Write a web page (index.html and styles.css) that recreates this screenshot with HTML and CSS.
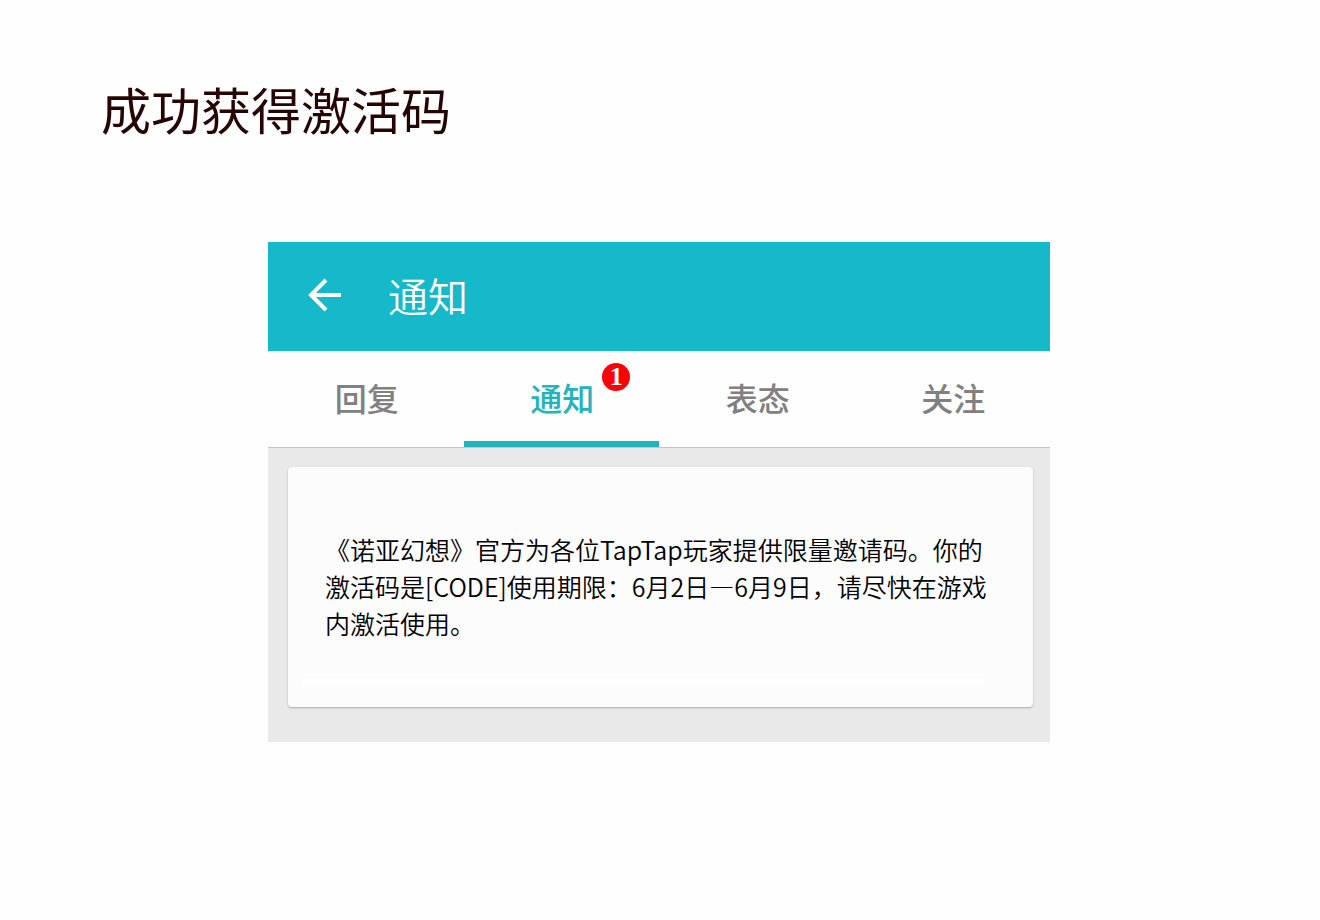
FILE: index.html
```html
<!DOCTYPE html>
<html lang="zh-CN">
<head>
<meta charset="utf-8">
<meta name="viewport" content="width=device-width, initial-scale=1">
<title>成功获得激活码</title>
<link rel="stylesheet" href="styles.css">
</head>
<body>
<h1 class="page-title">成功获得激活码</h1>
<main class="stage">
  <section class="panel">
    <header class="app-bar">
      <button class="back" type="button" aria-label="返回">
        <svg width="34" height="34" viewBox="0 0 34 34" fill="none" stroke="currentColor" stroke-width="4">
          <path d="M34 17H5M19 2L4 17L19 32"/>
        </svg>
      </button>
      <h2 class="app-title">通知</h2>
    </header>
    <nav class="tabs">
      <a class="tab" href="#reply">回复</a>
      <a class="tab tab-active" href="#notice" aria-current="page"><span class="tab-label">通知<span class="badge">1</span></span></a>
      <a class="tab" href="#attitude">表态</a>
      <a class="tab" href="#follow">关注</a>
    </nav>
    <div class="feed">
      <article class="card">
        <p class="message">《诺亚幻想》官方为各位TapTap玩家提供限量邀请码。你的<br>激活码是[CODE]使用期限：6月2日—6月9日，请尽快在游戏<br>内激活使用。</p>
        <div class="strip"></div>
      </article>
    </div>
  </section>
</main>
</body>
</html>
```

FILE: styles.css
```css
* {
  box-sizing: border-box;
}

body {
  margin: 0;
  background: #fefefe;
  font-family: "Noto Sans CJK SC", sans-serif;
}

.page-title {
  margin: 0;
  padding: 70px 101px 96px;
  color: #260404;
  font-size: 50px;
  font-weight: 400;
  line-height: 76px;
}

.stage {
  display: grid;
  grid-template-columns: 268fr 782fr 270fr;
}

.panel {
  grid-column: 2;
}

.app-bar {
  display: flex;
  align-items: center;
  gap: 47px;
  height: 109px;
  padding: 0 39px 4px;
  background: #16b9c9;
  color: #fff;
}

.back {
  display: flex;
  padding: 0;
  border: 0;
  background: none;
  color: inherit;
}

.app-title {
  margin: 0;
  font-size: 40px;
  font-weight: 350;
  line-height: 60px;
}

.tabs {
  display: grid;
  grid-template-columns: repeat(4, 1fr);
  height: 97px;
  border-bottom: 1px solid #c4c4c4;
  background: #fefefe;
}

.tab {
  display: flex;
  align-items: center;
  justify-content: center;
  padding: 0 0 4px 2px;
  border-top: 6px solid transparent;
  border-bottom: 6px solid transparent;
  color: #808080;
  font-size: 32px;
  font-weight: 500;
  text-decoration: none;
}

.tab-active {
  border-bottom-color: #22b3bd;
  color: #22b3bd;
}

.tab-label {
  position: relative;
}

.badge {
  position: absolute;
  top: -11px;
  right: -36px;
  display: flex;
  align-items: center;
  justify-content: center;
  width: 28px;
  height: 28px;
  border-radius: 50%;
  background: #fb0007;
  color: #fff;
  font-family: "Liberation Serif", serif;
  font-size: 26px;
  font-weight: 700;
  line-height: 28px;
}

.feed {
  padding: 19px 17px 35px 20px;
  background: #e9e9e9;
}

.card {
  padding: 64px 37px 20px;
  border-radius: 4px;
  background: #fcfcfc;
  box-shadow: 0 1px 2px #aaa;
}

.message {
  margin: 0;
  color: #000;
  font-size: 25px;
  font-weight: 350;
  line-height: 37px;
}

.strip {
  height: 8px;
  margin: 37px 12px 0 -24px;
  background: #fff;
}
```
